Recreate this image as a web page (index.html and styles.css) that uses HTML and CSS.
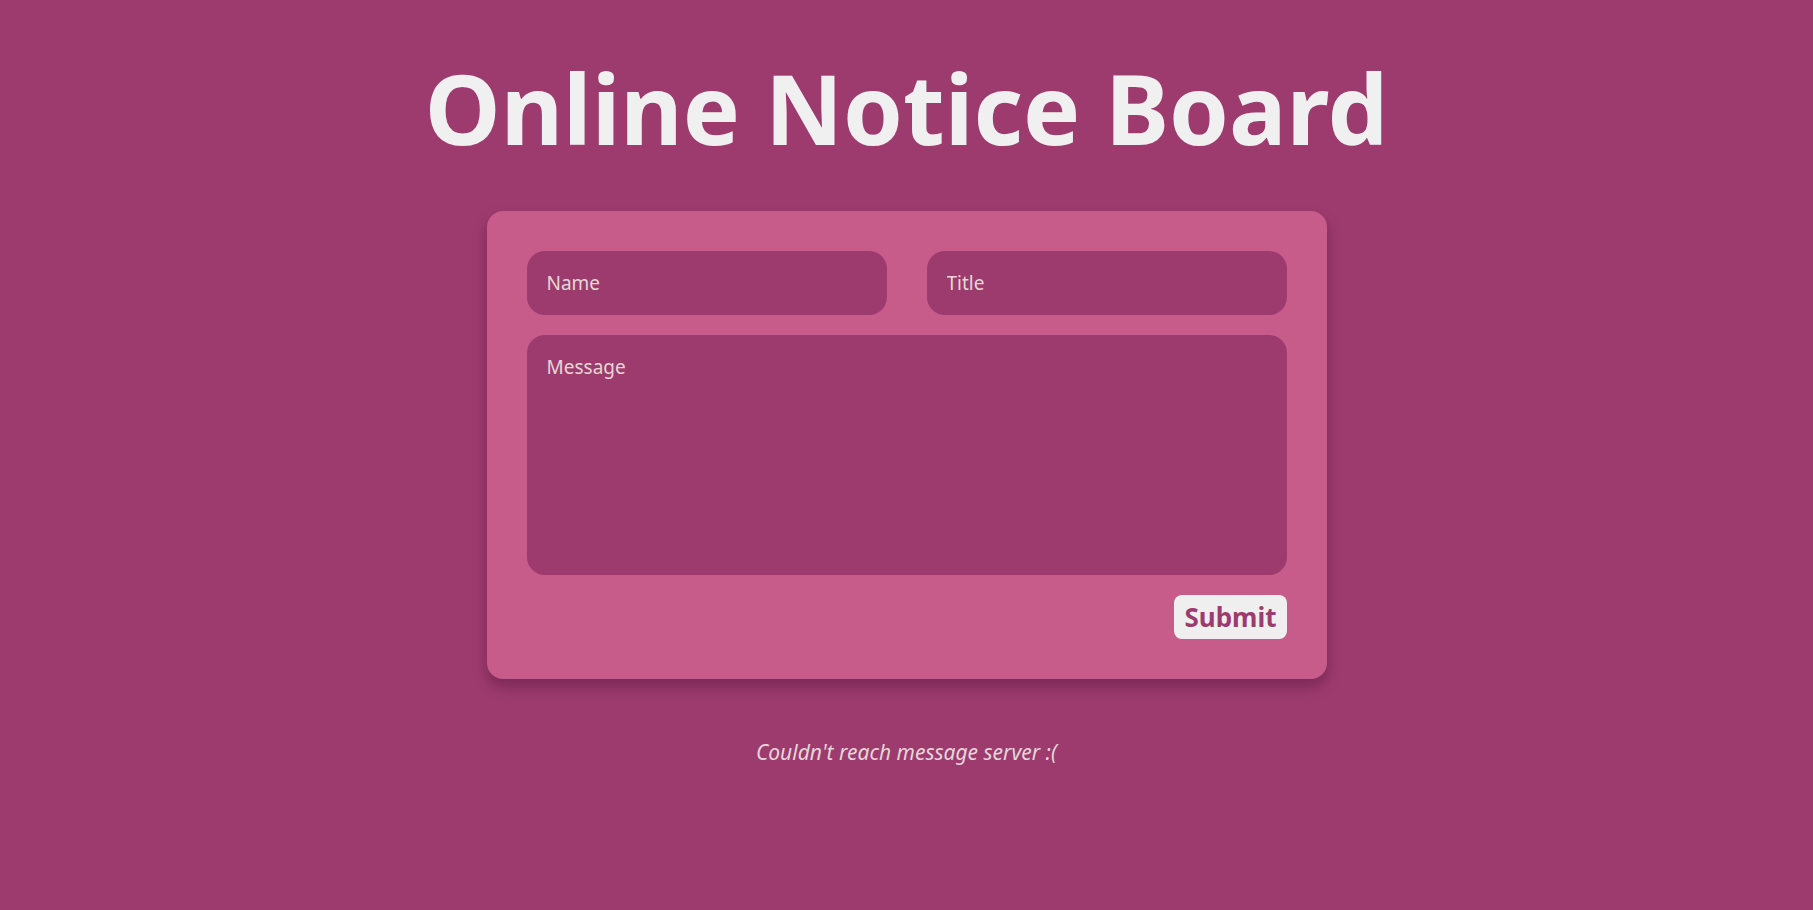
FILE: index.html
```html
<!DOCTYPE html>
<html lang="en">
<head>
<meta charset="utf-8">
<title>Online Notice Board</title>
<link rel="stylesheet" href="styles.css">
</head>
<body>
<main class="page">
  <h1 class="title">Online Notice Board</h1>
  <form class="card">
    <div class="row">
      <input class="field" type="text" placeholder="Name">
      <input class="field" type="text" placeholder="Title">
    </div>
    <textarea class="field message" placeholder="Message"></textarea>
    <div class="actions">
      <button class="submit" type="button">Submit</button>
    </div>
  </form>
  <p class="status">Couldn't reach message server :(</p>
</main>
</body>
</html>
```

FILE: styles.css
```css
html, body {
  margin: 0;
  padding: 0;
  background: #9d3b6f;
  font-family: "Noto Sans", "Open Sans", sans-serif;
  color: #f0f0f0;
}

.page {
  display: flex;
  flex-direction: column;
  align-items: center;
}

.title {
  margin: 50px 0 0;
  font-size: 96px;
  line-height: 116px;
  font-weight: 700;
  color: #f0f0f0;
  letter-spacing: 0;
}

.card {
  box-sizing: border-box;
  width: 840px;
  margin-top: 45px;
  padding: 40px;
  background: #c75b8a;
  border-radius: 16px;
  box-shadow: 0 8px 14px rgba(60, 10, 40, 0.35);
  display: flex;
  flex-direction: column;
  gap: 20px;
}

.row {
  display: grid;
  grid-template-columns: 1fr 1fr;
  gap: 40px;
}

.field {
  box-sizing: border-box;
  height: 64px;
  border: none;
  outline: none;
  border-radius: 18px;
  background: #9d3b6f;
  padding: 0 20px;
  font-family: "Noto Sans", sans-serif;
  font-size: 19px;
  color: #eee;
}

.field::placeholder {
  color: #e6d7d3;
  opacity: 1;
}

.message {
  height: 240px;
  padding: 19px 20px;
  resize: none;
  display: block;
  width: 100%;
}

.actions {
  display: flex;
  justify-content: flex-end;
}

.submit {
  height: 44px;
  padding: 0 10px;
  border: none;
  border-radius: 8px;
  background: #efefef;
  color: #9d3b6f;
  font-family: "Noto Sans", sans-serif;
  font-weight: 700;
  font-size: 26px;
  cursor: pointer;
}

.status {
  margin: 59px 0 0;
  font-style: italic;
  font-size: 21px;
  color: #e2d8d8;
}
```
